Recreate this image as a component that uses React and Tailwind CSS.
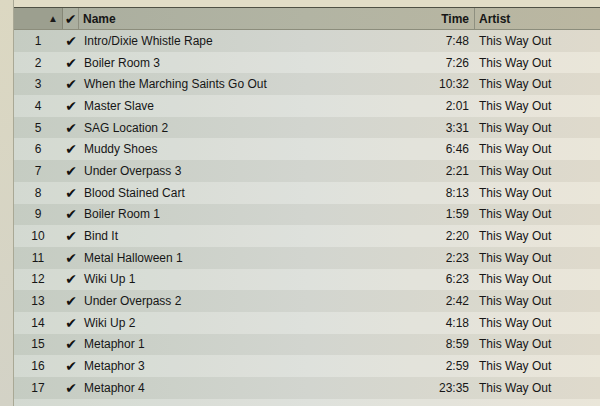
import React from "react";

const tracks = [
  ["Intro/Dixie Whistle Rape", "7:48"],
  ["Boiler Room 3", "7:26"],
  ["When the Marching Saints Go Out", "10:32"],
  ["Master Slave", "2:01"],
  ["SAG Location 2", "3:31"],
  ["Muddy Shoes", "6:46"],
  ["Under Overpass 3", "2:21"],
  ["Blood Stained Cart", "8:13"],
  ["Boiler Room 1", "1:59"],
  ["Bind It", "2:20"],
  ["Metal Halloween 1", "2:23"],
  ["Wiki Up 1", "6:23"],
  ["Under Overpass 2", "2:42"],
  ["Wiki Up 2", "4:18"],
  ["Metaphor 1", "8:59"],
  ["Metaphor 3", "2:59"],
  ["Metaphor 4", "23:35"],
];

const Check = () => (
  <span className="text-[14px] leading-none text-[#111] font-['DejaVu_Sans',sans-serif]">
    ✔
  </span>
);

const App = () => {
  return (
    <div className="w-[600px] h-[406px] overflow-hidden bg-[#dedbc9] font-['Liberation_Sans',Arial,sans-serif] text-[12px] text-[#161616] flex">
      {/* left window edge */}
      <div className="w-[14px] shrink-0 bg-linear-to-b from-[#dcd8c2] to-[#d3d2c6] border-r border-[#a9a895]" />

      <div className="flex-1 flex flex-col">
        <div className="h-[8px] shrink-0 bg-[#e2ddc7] border-b border-[#4f5044]" />

        {/* header */}
        <div className="h-[22px] shrink-0 flex items-center bg-linear-to-r from-[#a9ad9e] via-[#b2b4a3] to-[#bbb7a1] border-b border-[#8c8d7c] font-bold">
          <div className="w-[49px] h-full flex items-center justify-end pr-[4px] bg-[#9c9f8f] border-r border-[#858676]">
            <span className="text-[10px] text-[#1a1a1a]">▲</span>
          </div>
          <div className="w-[16px] h-full flex items-center justify-center border-r border-[#8e8f80]">
            <Check />
          </div>
          <div className="flex-1 pl-[4px]">Name</div>
          <div className="w-[60px] h-full flex items-center justify-end pr-[5px] border-r border-[#8e8f80]">
            Time
          </div>
          <div className="w-[125px] pl-[4px]">Artist</div>
        </div>

        {/* rows */}
        <div className="flex-1 flex flex-col bg-linear-to-r from-[#ccd3c9] via-[#d9dcd6] to-[#e7e2d3]">
          {tracks.map(([name, time], i) => (
            <div
              key={i}
              className={`h-[21.7px] shrink-0 flex items-center ${
                i % 2 === 0 ? "bg-black/[0.03]" : "bg-white/[0.15]"
              }`}
            >
              <div className="w-[49px] text-center pr-[1px]">{i + 1}</div>
              <div className="w-[16px] flex justify-center">
                <Check />
              </div>
              <div className="flex-1 pl-[5px] whitespace-nowrap">{name}</div>
              <div className="w-[60px] text-right pr-[6px]">{time}</div>
              <div className="w-[125px] pl-[4px] whitespace-nowrap">This Way Out</div>
            </div>
          ))}
          <div className="flex-1 bg-white/[0.15]" />
        </div>
      </div>
    </div>
  );
};

export default App;
